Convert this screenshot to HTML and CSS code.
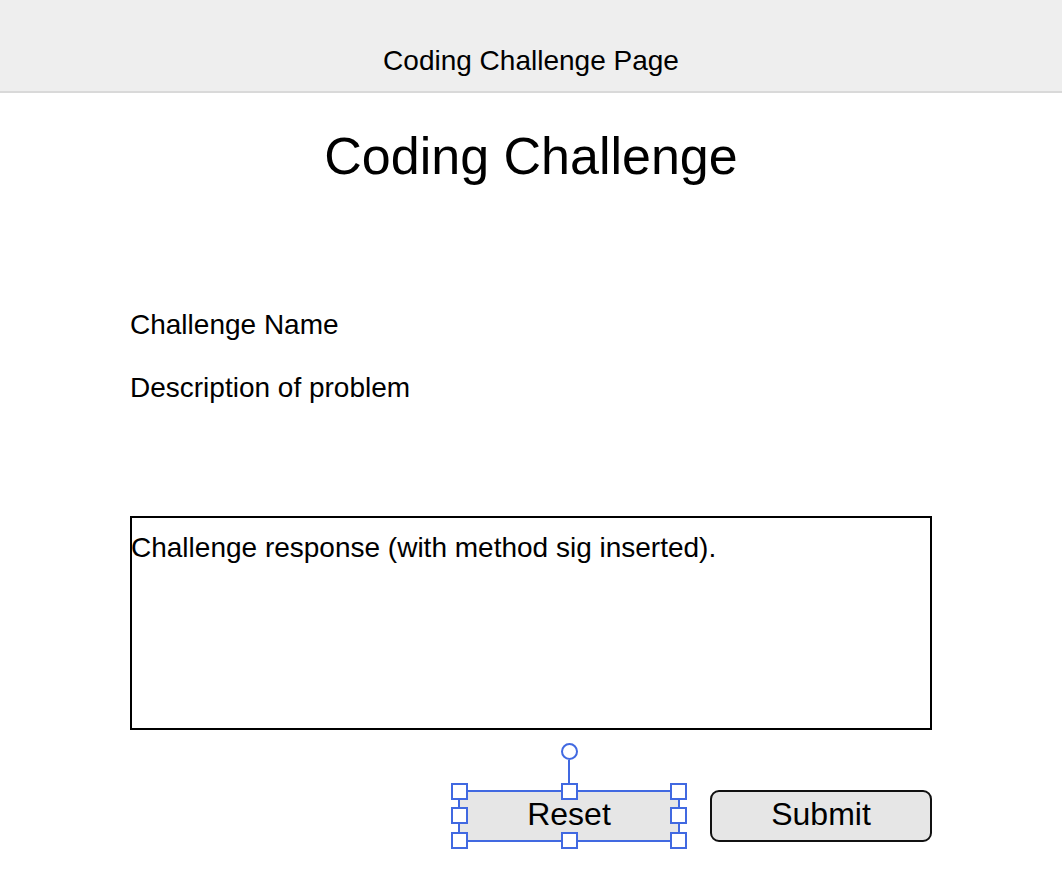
FILE: index.html
```html
<!DOCTYPE html>
<html lang="en">
<head>
<meta charset="utf-8">
<title>Coding Challenge Page</title>
<link rel="stylesheet" href="styles.css">
</head>
<body>
  <header class="topbar">
    <div class="topbar-title">Coding Challenge Page</div>
  </header>
  <main class="page">
    <h1 class="page-title">Coding Challenge</h1>
    <div class="challenge-name">Challenge Name</div>
    <div class="challenge-desc">Description of problem</div>
    <div class="response-box">Challenge response (with method sig inserted).</div>
    <div class="actions">
      <div class="btn btn-reset">
        Reset
        <span class="rot-line"></span>
        <span class="rot-knob"></span>
        <span class="handle h-tl"></span>
        <span class="handle h-tm"></span>
        <span class="handle h-tr"></span>
        <span class="handle h-ml"></span>
        <span class="handle h-mr"></span>
        <span class="handle h-bl"></span>
        <span class="handle h-bm"></span>
        <span class="handle h-br"></span>
      </div>
      <div class="btn btn-submit">Submit</div>
    </div>
  </main>
</body>
</html>
```

FILE: styles.css
```css
html, body {
  margin: 0;
  padding: 0;
  background: #ffffff;
}

body {
  font-family: "Liberation Sans", Arial, Helvetica, sans-serif;
  color: #000;
  min-height: 880px;
}

.topbar {
  height: 91px;
  box-sizing: content-box;
  background: #eeeeee;
  border-bottom: 2px solid #d9d9d9;
  display: flex;
  justify-content: center;
}

.topbar-title {
  margin-top: 45px;
  font-size: 28px;
  line-height: 32px;
}

.page {
  width: 802px;
  margin: 0 auto;
  padding-bottom: 30px;
  display: flex;
  flex-direction: column;
}

.page-title {
  margin: 33px 0 0;
  font-size: 52px;
  font-weight: normal;
  line-height: 60px;
  text-align: center;
}

.challenge-name,
.challenge-desc {
  font-size: 28px;
  line-height: 32px;
}

.challenge-name {
  margin-top: 123px;
}

.challenge-desc {
  margin-top: 31px;
}

.response-box {
  margin-top: 112px;
  height: 214px;
  box-sizing: border-box;
  border: 2px solid #000;
  padding: 14px 0 0 0;
  font-size: 28px;
  line-height: 32px;
  text-indent: -1px;
}

.actions {
  margin-top: 60px;
  display: flex;
  justify-content: flex-end;
  gap: 30px;
}

.btn {
  width: 222px;
  height: 52px;
  box-sizing: border-box;
  background: #e6e6e6;
  display: flex;
  align-items: center;
  justify-content: center;
  font-size: 32px;
  line-height: 36px;
  padding-bottom: 4px;
}

.btn-submit {
  border: 2px solid #111;
  border-radius: 9px;
}

.btn-reset {
  position: relative;
  border: 2px solid #4169e1;
}

.handle {
  position: absolute;
  width: 17px;
  height: 17px;
  box-sizing: border-box;
  background: #fff;
  border: 2px solid #4169e1;
}

.h-tl { left: -9px; top: -9px; }
.h-tm { left: 101px; top: -9px; }
.h-tr { right: -9px; top: -9px; }
.h-ml { left: -9px; top: 15px; }
.h-mr { right: -9px; top: 15px; }
.h-bl { left: -9px; bottom: -9px; }
.h-bm { left: 101px; bottom: -9px; }
.h-br { right: -9px; bottom: -9px; }

.rot-line {
  position: absolute;
  left: 108px;
  top: -32px;
  width: 2px;
  height: 24px;
  background: #4169e1;
}

.rot-knob {
  position: absolute;
  left: 101px;
  top: -49px;
  width: 17px;
  height: 17px;
  box-sizing: border-box;
  border: 2px solid #4169e1;
  border-radius: 50%;
  background: #fff;
}
```
